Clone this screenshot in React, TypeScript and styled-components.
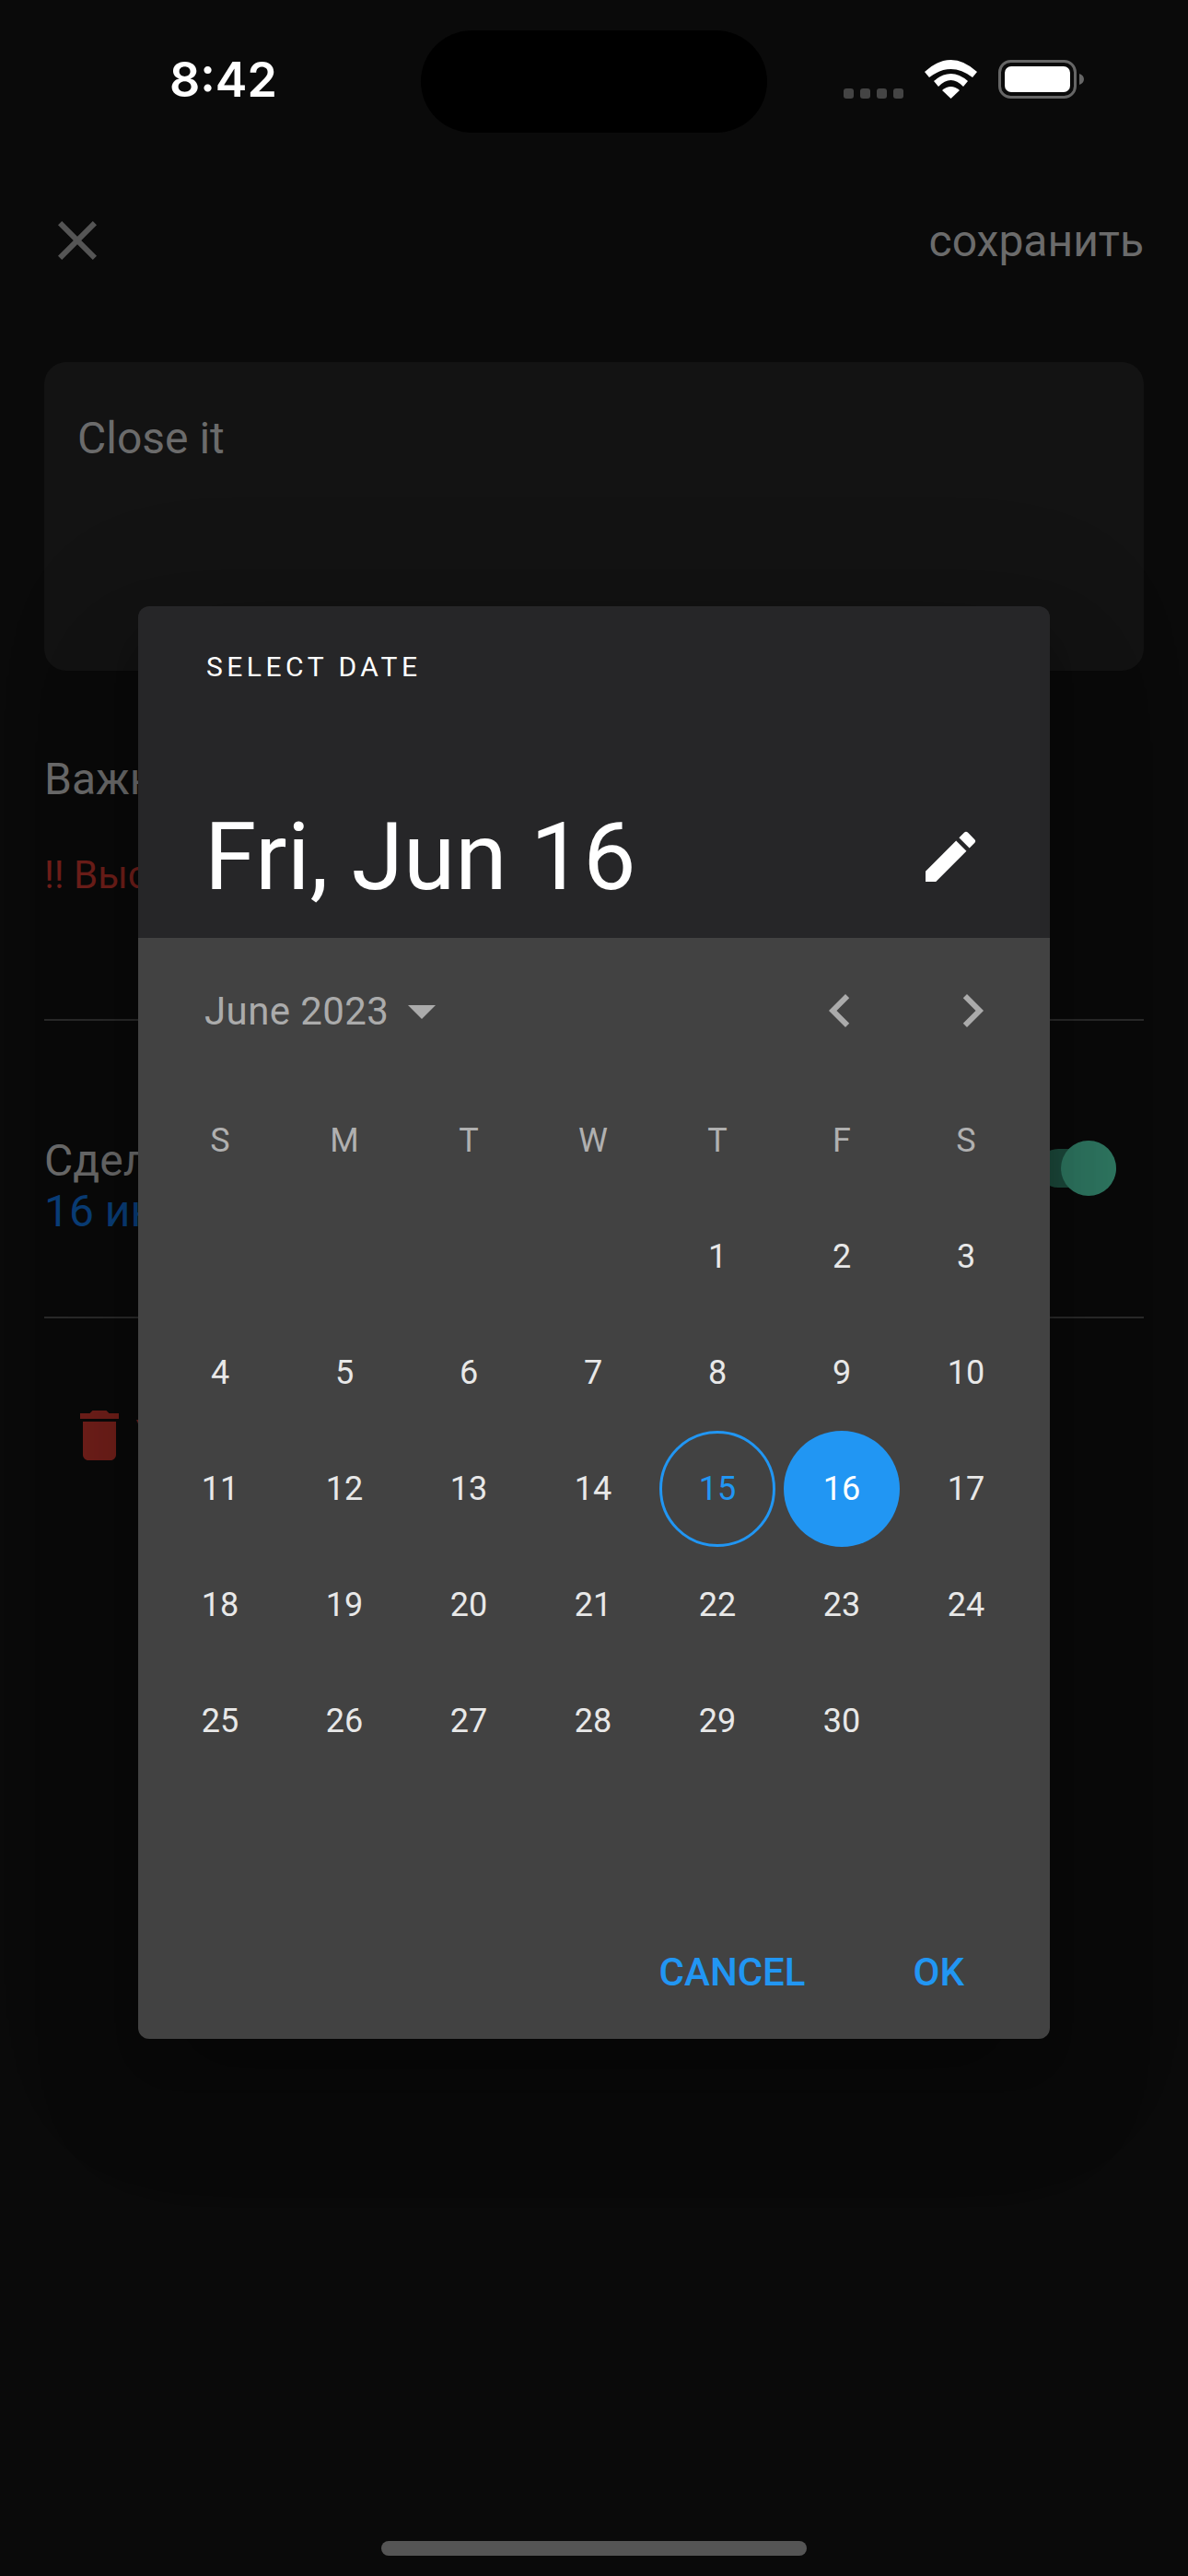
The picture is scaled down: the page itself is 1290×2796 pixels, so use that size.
import React from 'react';
import styled, { createGlobalStyle } from 'styled-components';
import { MdArrowDropDown, MdChevronLeft, MdChevronRight, MdClose, MdDelete, MdEdit } from 'react-icons/md';

const WEEKDAYS = ['S', 'M', 'T', 'W', 'T', 'F', 'S'];
// June 2023 starts on a Thursday
const LEADING_BLANKS = 4;
const DAYS = Array.from({ length: 30 }, (_, i) => i + 1);
const TODAY = 15;
const SELECTED = 16;

const App: React.FC = () => {
  return (
    <Page>
      <GlobalStyle />

      <StatusBar>
        <Time>8:42</Time>
        <Island />
        <StatusIcons>
          <SignalDots>
            <SignalDot />
            <SignalDot />
            <SignalDot />
            <SignalDot />
          </SignalDots>
          <WifiIcon width="57" height="42" viewBox="0 0 57 42" fill="#fff">
            <path d="M0 13Q28.5 -13 57 13L52 19Q28.5 1 5 19Z" />
            <path d="M10 23Q28.5 7 47 23L42 29Q28.5 15 15 29Z" />
            <path d="M19 33Q28.5 25 38 33L28.5 42Z" />
          </WifiIcon>
          <svg width="93" height="42" viewBox="0 0 93 42">
            <rect x="1.5" y="1.5" width="82" height="39" rx="12" fill="none" stroke="#666" strokeWidth="3" />
            <rect x="7" y="7" width="71" height="28" rx="7" fill="#fff" />
            <path d="M88 15c3 1 5 3 5 6s-2 5-5 6z" fill="#666" />
          </svg>
        </StatusIcons>
      </StatusBar>

      <Header>
        <MdClose size={72} color="#555" />
        <SaveLabel>сохранить</SaveLabel>
      </Header>

      <NoteCard>Close it</NoteCard>

      <PriorityLabel>Важность</PriorityLabel>
      <PriorityValue>!! Высокая</PriorityValue>
      <Divider $top={131} />

      <DueRow>
        <DueText>
          <DueLabel>Сделать до</DueLabel>
          <DueValue>16 июня 2023</DueValue>
        </DueText>
        <Toggle>
          <ToggleTrack />
          <ToggleThumb />
        </Toggle>
      </DueRow>
      <Divider $top={87} />

      <DeleteRow>
        <MdDelete size={72} color="#701f1a" />
        <DeleteLabel>Удалить</DeleteLabel>
      </DeleteRow>

      <Dialog>
        <DialogHeader>
          <Overline>SELECT DATE</Overline>
          <HeaderDateRow>
            <HeaderDate>Fri, Jun 16</HeaderDate>
            <MdEdit size={72} color="#fff" />
          </HeaderDateRow>
        </DialogHeader>

        <Calendar>
          <MonthRow>
            <MonthSwitch>
              <MonthLabel>June 2023</MonthLabel>
              <MdArrowDropDown size={72} color="#ababab" />
            </MonthSwitch>
            <MonthArrows>
              <MdChevronLeft size={72} color="#ababab" />
              <MdChevronRight size={72} color="#ababab" />
            </MonthArrows>
          </MonthRow>

          <WeekdayRow>
            {WEEKDAYS.map((d, i) => (
              <Weekday key={i}>{d}</Weekday>
            ))}
          </WeekdayRow>

          <DayGrid>
            {Array.from({ length: LEADING_BLANKS }, (_, i) => (
              <span key={i} />
            ))}
            {DAYS.map((d) => (
              <Day key={d} $today={d === TODAY} $selected={d === SELECTED}>
                {d}
              </Day>
            ))}
          </DayGrid>

          <Actions>
            <ActionButton>CANCEL</ActionButton>
            <ActionButton>OK</ActionButton>
          </Actions>
        </Calendar>
      </Dialog>

      <HomeBar />
    </Page>
  );
};

const GlobalStyle = createGlobalStyle`
  html, body {
    margin: 0;
    padding: 0;
    background: #0a0a0a;
  }
  * {
    box-sizing: border-box;
  }
`;

const Page = styled.div`
  position: relative;
  width: 1290px;
  height: 2796px;
  padding: 0 48px;
  overflow: hidden;
  background: #0a0a0a;
  font-family: Roboto, 'Liberation Sans', sans-serif;
`;

const StatusBar = styled.div`
  display: grid;
  grid-template-columns: 409px 376px 1fr;
  height: 144px;
  padding-top: 33px;
  margin: 0 -48px 0 0;
`;

const Time = styled.div`
  padding: 22px 0 0 136px;
  font-family: Inter, sans-serif;
  font-size: 52px;
  line-height: 64px;
  font-weight: 600;
  color: #fff;
`;

const Island = styled.div`
  height: 111px;
  border-radius: 56px;
  background: #000;
`;

const StatusIcons = styled.div`
  display: flex;
  align-items: flex-end;
  height: 74px;
  padding-left: 83px;
`;

const SignalDots = styled.div`
  display: flex;
  gap: 7px;
  margin-right: 23px;
`;

const SignalDot = styled.span`
  width: 11px;
  height: 11px;
  border-radius: 3px;
  background: #444;
`;

const WifiIcon = styled.svg`
  margin-right: 23px;
`;

const Header = styled.div`
  display: flex;
  justify-content: space-between;
  align-items: center;
  height: 72px;
  margin-top: 81px;
`;

const SaveLabel = styled.div`
  font-size: 48px;
  color: #6b6b6b;
`;

const NoteCard = styled.div`
  height: 335px;
  margin-top: 96px;
  padding: 55px 36px;
  border-radius: 24px;
  background: #131313;
  font-size: 48px;
  line-height: 56px;
  color: #6b6b6b;
`;

const PriorityLabel = styled.div`
  margin-top: 90px;
  font-size: 48px;
  line-height: 56px;
  color: #6b6b6b;
`;

const PriorityValue = styled.div`
  margin-top: 51px;
  font-size: 42px;
  line-height: 50px;
  color: #701f1a;
`;

const Divider = styled.div<{ $top: number }>`
  height: 2px;
  margin-top: ${({ $top }) => $top}px;
  background: #2a2a2a;
`;

const DueRow = styled.div`
  display: flex;
  justify-content: space-between;
  align-items: flex-start;
  margin-top: 124px;
`;

const DueText = styled.div`
  display: flex;
  flex-direction: column;
`;

const DueLabel = styled.div`
  font-size: 48px;
  line-height: 55px;
  color: #6b6b6b;
`;

const DueValue = styled.div`
  font-size: 48px;
  line-height: 55px;
  color: #0a3f7a;
`;

const Toggle = styled.div`
  position: relative;
  width: 84px;
  height: 60px;
  margin: 6px 30px 0 0;
`;

const ToggleTrack = styled.div`
  height: 42px;
  margin-top: 9px;
  background: #1c4a3c;
  border-radius: 21px;
`;

const ToggleThumb = styled.div`
  position: absolute;
  top: 0;
  right: 0;
  width: 60px;
  height: 60px;
  border-radius: 50%;
  background: #2f7862;
`;

const DeleteRow = styled.div`
  display: flex;
  align-items: center;
  gap: 2px;
  margin-top: 91px;
  padding-left: 24px;
`;

const DeleteLabel = styled.div`
  font-size: 48px;
  color: #701f1a;
`;

const Dialog = styled.div`
  position: absolute;
  top: 658px;
  left: 150px;
  width: 990px;
  height: 1555px;
  display: flex;
  flex-direction: column;
  border-radius: 12px;
  overflow: hidden;
  box-shadow: 0 33px 45px -21px rgba(0, 0, 0, 0.2), 0 72px 114px 9px rgba(0, 0, 0, 0.14),
    0 27px 138px 24px rgba(0, 0, 0, 0.12);
`;

const DialogHeader = styled.div`
  height: 360px;
  padding: 46px 72px 0 74px;
  background: #262628;
  color: #fff;
`;

const Overline = styled.div`
  font-size: 30px;
  line-height: 40px;
  font-weight: 400;
  letter-spacing: 4.5px;
`;

const HeaderDateRow = styled.div`
  display: flex;
  justify-content: space-between;
  align-items: center;
  margin-top: 126px;
  margin-left: -2px;
`;

const HeaderDate = styled.div`
  font-size: 102px;
  line-height: 120px;
`;

const Calendar = styled.div`
  flex: 1;
  display: flex;
  flex-direction: column;
  background: #424242;
`;

const MonthRow = styled.div`
  display: flex;
  justify-content: space-between;
  margin-top: 43px;
  padding: 0 48px 0 72px;
`;

const MonthSwitch = styled.div`
  display: flex;
  align-items: center;
`;

const MonthLabel = styled.div`
  font-size: 42px;
  letter-spacing: 0.4px;
  color: #ababab;
`;

const MonthArrows = styled.div`
  display: flex;
  gap: 72px;
`;

const WeekdayRow = styled.div`
  display: grid;
  grid-template-columns: repeat(7, 135px);
  margin-top: 75px;
  padding-left: 21.5px;
`;

const Weekday = styled.div`
  height: 60px;
  line-height: 60px;
  text-align: center;
  font-size: 36px;
  color: #b0b0b0;
`;

const DayGrid = styled.div`
  display: grid;
  grid-template-columns: repeat(7, 135px);
  grid-auto-rows: 126px;
  margin-top: 33px;
  padding-left: 21.5px;
`;

const Day = styled.div<{ $today: boolean; $selected: boolean }>`
  justify-self: center;
  width: 126px;
  height: 126px;
  line-height: ${({ $today }) => ($today ? 120 : 126)}px;
  text-align: center;
  font-size: 36px;
  border-radius: 50%;
  color: ${({ $today, $selected }) => ($selected ? '#fff' : $today ? '#2196f3' : '#e8e8e8')};
  background: ${({ $selected }) => ($selected ? '#2196f3' : 'transparent')};
  border: ${({ $today }) => ($today ? '3px solid #2196f3' : 'none')};
`;

const Actions = styled.div`
  display: flex;
  justify-content: flex-end;
  gap: 117px;
  margin-top: auto;
  padding: 0 93px 42px 0;
`;

const ActionButton = styled.div`
  font-size: 42px;
  line-height: 60px;
  font-weight: 500;
  color: #2196f3;
`;

const HomeBar = styled.div`
  position: absolute;
  left: 414px;
  top: 2758px;
  width: 462px;
  height: 16px;
  border-radius: 8px;
  background: #555;
`;

export default App;
